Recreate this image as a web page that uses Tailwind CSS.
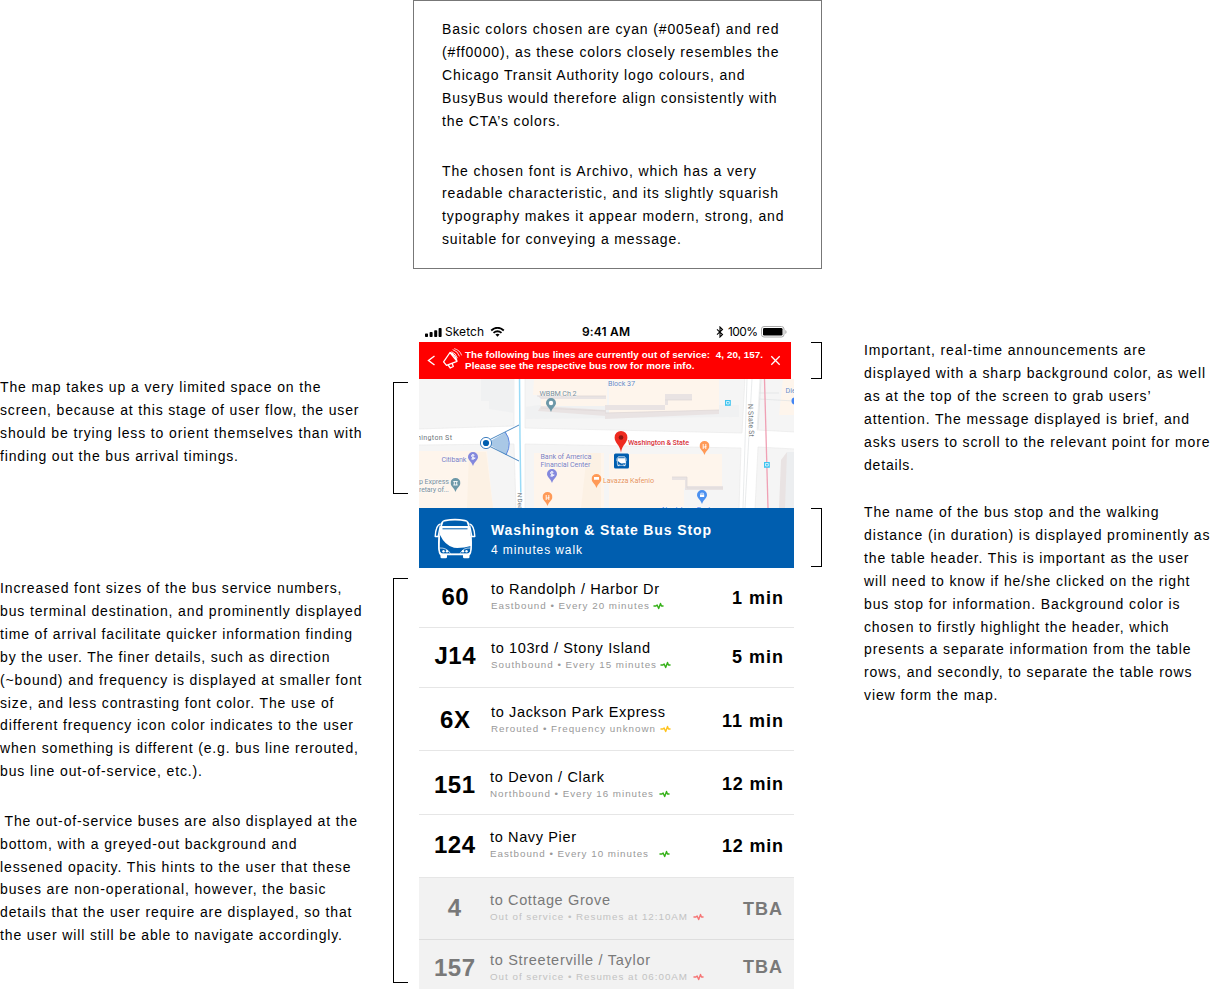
<!DOCTYPE html>
<html lang="en">
<head>
<meta charset="utf-8">
<title>BusyBus design notes</title>
<script src="https://cdn.jsdelivr.net/npm/@tailwindcss/browser@4"></script>
</head>
<body class="bg-white">
<svg class="hidden">
  <symbol id="pulse" viewBox="0 0 12 8"><path d="M0.5 4h2.700l1.300-1.200 1.700 4L8.200 1.200l1 2.800h2.300" fill="none" stroke="currentColor" stroke-width="1.500" stroke-linejoin="round"/></symbol>
  <symbol id="bus" viewBox="0 0 42 42">
    <path d="M6 9.500Q6.500 4 11 2.800Q21 .6 31 2.800Q35.500 4 36 9.500L37.500 26Q38 35 35.500 37.500H6.500Q4 35 4.500 26Z" fill="#fff"/>
    <path d="M6.500 37h6.500v3q0 1.300-1.300 1.300H7.800Q6.500 41.300 6.500 40ZM29 37h6.500v3q0 1.300-1.300 1.300h-3.900Q29 41.300 29 40Z" fill="#fff"/>
    <path d="M9.500 4.800Q21 2.200 32.500 4.800L34 9H8Z" fill="#005eaf"/>
    <path d="M8.500 11.800h25" stroke="#005eaf" stroke-width="1"/>
    <path d="M6 18Q11 28.500 20 30.800Q29 31.300 36.800 29L36.500 33.500Q35.500 36.500 33 36.500H9Q6 36.500 5.500 32Z" fill="#005eaf"/>
    <path d="M5.500 31Q13 30.500 16.500 36.700M36.500 31Q29 30.500 26 36.700" fill="none" stroke="#fff" stroke-width=".7"/>
    <path d="M6.500 7Q1.800 8 1.200 19.500H4.200L6.300 9M35.500 7q4.700 1 5.300 12.500H37.800L35.700 9" fill="#005eaf" stroke="#fff" stroke-width="1.400" stroke-linejoin="round"/>
    <path d="M5 19Q4 35 6.500 37.500h29Q38 35 37 19" fill="none" stroke="#fff" stroke-width="1.500"/>
    <g fill="#fff"><circle cx="9.500" cy="34.300" r="1.200"/><circle cx="13" cy="34.300" r="1.200"/><circle cx="29" cy="34.300" r="1.200"/><circle cx="32.500" cy="34.300" r="1.200"/></g>
  </symbol>
  <symbol id="pin" viewBox="0 0 10 14"><path d="M5 0a5 5 0 0 1 5 5C10 8 6.500 9.500 5 14C3.500 9.500 0 8 0 5A5 5 0 0 1 5 0Z" fill="currentColor"/></symbol>
</svg>

<main class="flex w-[1216px] h-[989px] overflow-hidden font-['Liberation_Sans',sans-serif] text-[14px] leading-[22.9px] text-black whitespace-nowrap [&_span]:whitespace-pre">
  <!-- left notes -->
  <section class="w-[393px] shrink-0 pt-[376px]">
    <div class="h-[201px]">
      <p><span data-w="320.500">The map takes up a very limited space on the</span><br><span data-w="358.500">screen, because at this stage of user flow, the user</span><br><span data-w="361.500">should be trying less to orient themselves than with</span><br><span data-w="238">finding out the bus arrival timings.</span></p>
    </div>
    <p class="h-[233px]"><span data-w="341.500">Increased font sizes of the bus service numbers,</span><br><span data-w="361.500">bus terminal destination, and prominently displayed</span><br><span data-w="352">time of arrival facilitate quicker information finding</span><br><span data-w="329.500">by the user. The finer details, such as direction</span><br><span data-w="361.500">(~bound) and frequency is displayed at smaller font</span><br><span data-w="333.500">size, and less contrasting font color. The use of</span><br><span data-w="353">different frequency icon color indicates to the user</span><br><span data-w="358">when something is different (e.g. bus line rerouted,</span><br><span data-w="202">bus line out-of-service, etc.).</span></p>
    <p class="leading-[22.800px]"><span data-w="357"> The out-of-service buses are also displayed at the</span><br><span data-w="296.500">bottom, with a greyed-out background and</span><br><span data-w="350.500">lessened opacity. This hints to the user that these</span><br><span data-w="325.500">buses are non-operational, however, the basic</span><br><span data-w="351.500">details that the user require are displayed, so that</span><br><span data-w="342">the user will still be able to navigate accordingly.</span></p>
  </section>
  <div class="w-[20px] shrink-0 pt-[382px]">
    <div class="w-[15px] h-[112px] border border-r-0 border-black"></div>
    <div class="mt-[84px] w-[15px] h-[405px] border border-r-0 border-black"></div>
  </div>

  <!-- centre column -->
  <section class="w-[398px] shrink-0">
    <div class="w-[409px] h-[269px] border border-[#777] pl-[28px] pt-[17px]">
      <p class="h-[141.500px]"><span data-w="336.500">Basic colors chosen are cyan (#005eaf) and red</span><br><span data-w="336.500">(#ff0000), as these colors closely resembles the</span><br><span data-w="302.500">Chicago Transit Authority logo colours, and</span><br><span data-w="334.500">BusyBus would therefore align consistently with</span><br><span data-w="118">the CTA’s colors.</span></p>
      <p><span data-w="314">The chosen font is Archivo, which has a very</span><br><span data-w="336">readable characteristic, and its slightly squarish</span><br><span data-w="341.500">typography makes it appear modern, strong, and</span><br><span data-w="239">suitable for conveying a message.</span></p>
    </div>

    <div class="ml-[6px] mt-[53px] w-[375px]">
      <!-- status bar -->
      <div class="h-[20px] flex items-center font-['Inter',sans-serif] text-[12px] leading-[20px]">
        <svg class="ml-[6px] mt-px w-[17px] h-[9px]" viewBox="0 0 17 10" preserveAspectRatio="none"><rect x="0" y="6" width="3" height="4" rx=".8"/><rect x="4.600" y="4.500" width="3" height="5.500" rx=".8"/><rect x="9.200" y="2.500" width="3" height="7.500" rx=".8"/><rect x="13.600" y="0" width="3" height="10" rx=".8"/></svg>
        <div class="ml-[3px] w-[45px]"><span data-w="39">Sketch</span></div>
        <svg class="w-[15px] h-[10px]" viewBox="0 0 14 10" fill="none" stroke="#000" stroke-width="1.900"><path d="M.7 3.400Q7-1.800 13.300 3.400M3 5.900Q7 2.500 11 5.900"/><path d="M7 9.700L4.900 7.600Q7 6 9.100 7.600Z" fill="#000" stroke="none"/></svg>
        <div class="ml-[77px] w-[134px] font-semibold"><span data-w="48">9:41 AM</span></div>
        <svg class="w-[8px] h-[12px]" viewBox="0 0 8 12" fill="none" stroke="#000" stroke-width="1.100"><path d="M1 3.300L6.500 8.500L4 11V1L6.500 3.500L1 8.700"/></svg>
        <div class="ml-[4px] w-[33px]"><span data-w="30">100%</span></div>
        <svg class="w-[26px] h-[12px]" viewBox="0 0 26 12"><rect x=".5" y=".5" width="22.500" height="10.500" rx="2.500" fill="none" stroke="#aaa"/><rect x="2" y="2" width="19.500" height="7.500" rx="1.200"/><path d="M24.300 4v4q1.300-.6 1.300-2t-1.300-2Z" fill="#aaa"/></svg>
      </div>
      <!-- alert -->
      <div class="w-[372px] h-[37px] bg-[#ff0000] flex items-center text-white">
        <svg class="ml-[8px] w-[9px] h-[11px]" viewBox="0 0 9 11" fill="none" stroke="#fff" stroke-width="1.400"><path d="M7.500 1L1.500 5.500L7.500 10"/></svg>
        <svg class="ml-[6px] mb-[4px] w-[21px] h-[21px]" viewBox="0 0 21 21" fill="none" stroke="#fff" stroke-width="1.300" stroke-linejoin="round" stroke-linecap="round"><path d="M8 4.500L15 13.300L4.500 17.300L1.600 13.800ZM8 4.500Q10.500 5 12.700 7.800T15 13.300M6.500 17.500l1.800 2.500l3-1.500l-1-2.700"/><path d="M9.800 3.700Q14 5 15.300 9.800M11 1.700Q16 3.200 17.400 8M12.500 .7Q18 2 19.500 7" stroke-width=".8"/></svg>
        <p class="ml-[2px] mb-[2px] w-[304px] font-bold text-[9.800px] leading-[11px]"><span data-w="298">The following bus lines are currently out of service:  4, 20, 157.</span><br><span data-w="229.500">Please see the respective bus row for more info.</span></p>
        <svg class="ml-[1px] w-[11px] h-[11px]" viewBox="0 0 11 11" stroke="#fff" stroke-width="1.300"><path d="M1.300 1.300L9.700 9.700M9.700 1.300L1.300 9.700"/></svg>
      </div>
      <!-- map -->
      <svg class="block w-[375px] h-[129px]" viewBox="0 0 375 129" font-family="Roboto, sans-serif" font-size="7.200">
        <rect width="375" height="129" fill="#fff"/>
        <g fill="#f5f5f5" stroke="#e8e8e8" stroke-width=".6">
          <path d="M-1-1H95V47L-1 50ZM106-1H326L323 54L106 49ZM341-1H376V53L338 51ZM-1 66L95 65L97 130H-1ZM106 65L322 69L320 130H106ZM339 68L376 70V130H336Z"/>
        </g>
        <path d="M62 0H95V34L70 30V22H62ZM120 26H320V38L106 40V28Z" fill="#f0f1f2"/>
        <path d="M115 0H188V27H122V16H114ZM190 0H300V34H190ZM0 72H68L74 129H0ZM115 74H185V129H115ZM190 75H303V109H265V129H190ZM364 0H375V36H360Z" fill="#fef5ec"/>
        <path d="M50 73H67L74 129H48ZM168 74H182V129H162Z" fill="#fcf1e4"/>
        <path d="M119 17H187V20H122ZM122 27L187 31V37L119 32ZM186 26H246V31H186ZM246 15H273V21H249V26H246ZM186 34L300 31V35L186 40ZM253 98H268V107H304V111H266V101H253ZM362 81L368 73V129H360Z" fill="#e9e3e3"/>
        <path d="M118 17H187M122 29L187 32M186 34L300 31M246 21H273M253 98H268V109H304" fill="none" stroke="#dcd5d6" stroke-width=".7"/>
        <path d="M340 14H360M340 20L375 22M342 0L339 50M333 0L326 129M328 0L324 129" fill="none" stroke="#dfe2e4" stroke-width=".7"/>
        <path d="M368 73H375V129H366Z" fill="#eceef0"/>
        <path d="M100.500 0L101 60L102 129" fill="none" stroke="#9adbf7" stroke-width="1.500"/>
        <path d="M345.500 0L349 129" fill="none" stroke="#f0a0b4" stroke-width="1.300"/>
        <path d="M68 64L87 53Q93 64 87 76Z" fill="#a9c8e6"/><path d="M86 53Q94 63 87 76" fill="none" stroke="#5a86e0" stroke-width="1"/>
        <path d="M70 61L100 46M70 67L100 82" stroke="#3579ba" stroke-width=".9"/>
        <circle cx="67" cy="64" r="5.600" fill="#fff" stroke="#2a70b8" stroke-width=".9"/><circle cx="67" cy="64" r="3.100" fill="#005eaf"/>
        <g fill="#6c7479" stroke="#fff" stroke-width="1.500" paint-order="stroke">
          <text x="-2" y="60.500" textLength="35">hington St</text>
          <text transform="translate(98.500 114) rotate(88)" font-size="6">N Dea</text>
          <text transform="translate(329 25) rotate(88)" textLength="33">N State St</text>
        </g>
        <g stroke="#fff" stroke-opacity=".6" stroke-width="1" paint-order="stroke">
          <g fill="#7a909c"><text x="120.500" y="16.500" textLength="37">WBBM Ch 2</text><text x="0" y="105" textLength="30">p Express</text><text x="0" y="113" textLength="30">retary of...</text></g>
          <g fill="#7b7fc0"><text x="22.500" y="82.500" textLength="25">Citibank</text><text x="121.500" y="80" textLength="51">Bank of America</text><text x="121.500" y="88" textLength="50">Financial Center</text></g>
          <g fill="#6a8cc4"><text x="189" y="7" textLength="27">Block 37</text><text x="366.500" y="14">Die</text><text x="243" y="132.500" textLength="50" fill="#4285f4">Nordstrom Rack</text></g>
          <text x="184" y="104" fill="#e8935a" textLength="51">Lavazza Kafenio</text>
          <text x="209" y="65.500" fill="#d8303b" textLength="61" font-weight="500">Washington &amp; State</text>
        </g>
        <g class="text-[#6d98a8]"><use href="#pin" x="127" y="19" width="10" height="14"/><use href="#pin" x="31.500" y="99" width="10" height="14"/></g>
        <g class="text-[#8388dd]"><use href="#pin" x="49" y="73" width="10" height="14"/><use href="#pin" x="128" y="90" width="10" height="14"/></g>
        <g class="text-[#ff9a57]"><use href="#pin" x="123.500" y="113" width="10" height="14"/><use href="#pin" x="172.500" y="95" width="10" height="14"/><use href="#pin" x="280.500" y="62" width="10" height="14"/></g>
        <g class="text-[#4a90f0]"><use href="#pin" x="278" y="111" width="10" height="14"/></g>
        <circle cx="132" cy="24" r="2.200" fill="#fff"/>
        <g fill="none" stroke="#fff" stroke-width=".9"><path d="M34.300 102.500h4.400M34.300 106h4.400M35.300 103v3M37.700 103v3"/><path d="M127.200 116v5M129.800 116v3H127.200M284.200 65v5M286.800 65v3H284.200M129.800 118v3M286.800 67v3"/><path d="M55.500 76.300Q52 75 52.500 77T55.500 79T52.300 80M54 75v6M134.500 93.300Q131 92 131.500 94T134.500 96T131.300 97M133 92v6"/></g>
        <path d="M175 98h5v2.800h-5ZM281 115.500h4.200v2.600H281Z" fill="#fff"/><path d="M281.800 115.500v-1.300h2.600v1.300" fill="none" stroke="#fff" stroke-width=".7"/>
        <path d="M202 52A6.400 6.400 0 0 1 208.400 58.400C208.400 64 203 65.500 202 73.500C201 65.500 195.600 64 195.600 58.400A6.400 6.400 0 0 1 202 52Z" fill="#ee2b20"/><circle cx="202" cy="58.500" r="2.300" fill="#8e1510"/>
        <rect x="195" y="74.500" width="15" height="15" rx="1.500" fill="#005eaf"/><use href="#bus" x="197" y="76.500" width="11" height="11"/>
        <g fill="#3fc4f0"><rect x="306" y="21" width="5.800" height="5.800"/><rect x="345" y="83" width="5.800" height="5.800"/></g>
        <path d="M307.500 22.500h2.800v2.500h-2.800ZM346.500 84.500h2.800V87h-2.800Z" fill="none" stroke="#fff" stroke-width=".7"/>
        <circle cx="376" cy="22" r="3.500" fill="#4285f4"/>
      </svg>
      <!-- stop header -->
      <div class="h-[60px] bg-[#005eaf] text-white flex">
        <svg class="ml-[15px] mt-[9px] w-[42px] h-[42px]"><use href="#bus"/></svg>
        <div class="ml-[15px] pt-[12px]">
          <p class="text-[14px] leading-[20px] font-bold"><span data-w="220">Washington &amp; State Bus Stop</span></p>
          <p class="pt-px text-[12px] leading-[18px]"><span data-w="91">4 minutes walk</span></p>
        </div>
      </div>
      <!-- bus rows -->
      <div class="text-[14.500px] leading-[16px]">
        <div class="h-[60px] border-b border-[#e6e6e6] flex pt-[13px]">
          <div class="w-[72px] text-center text-[24px] leading-[32px] font-bold"><span data-w="27">60</span></div>
          <div class="w-[220px]"><p><span data-w="168">to Randolph / Harbor Dr</span></p><p class="mt-px flex items-center text-[9.800px] text-[#999]"><span data-w="158">Eastbound • Every 20 minutes</span><svg class="ml-[4px] w-[11px] h-[8px] text-[#33b016]"><use href="#pulse"/></svg></p></div>
          <div class="w-[72px] pt-[9px] text-right text-[18px] font-bold"><span data-w="51">1 min</span></div>
        </div>
        <div class="h-[60px] border-b border-[#e6e6e6] flex pt-[12px]">
          <div class="w-[72px] text-center text-[24px] leading-[32px] font-bold"><span data-w="41">J14</span></div>
          <div class="w-[220px]"><p><span data-w="159">to 103rd / Stony Island</span></p><p class="mt-px flex items-center text-[9.800px] text-[#999]"><span data-w="165">Southbound • Every 15 minutes</span><svg class="ml-[4px] w-[11px] h-[8px] text-[#33b016]"><use href="#pulse"/></svg></p></div>
          <div class="w-[72px] pt-[9px] text-right text-[18px] font-bold"><span data-w="51">5 min</span></div>
        </div>
        <div class="h-[63px] border-b border-[#e6e6e6] flex pt-[16px]">
          <div class="w-[72px] text-center text-[24px] leading-[32px] font-bold"><span data-w="30">6X</span></div>
          <div class="w-[220px]"><p><span data-w="174">to Jackson Park Express</span></p><p class="mt-px flex items-center text-[9.800px] text-[#999]"><span data-w="164">Rerouted • Frequency unknown</span><svg class="ml-[5px] w-[11px] h-[8px] text-[#ffc21a]"><use href="#pulse"/></svg></p></div>
          <div class="w-[72px] pt-[9px] text-right text-[18px] font-bold"><span data-w="61">11 min</span></div>
        </div>
        <div class="h-[64px] border-b border-[#e6e6e6] flex pt-[18px]">
          <div class="w-[71px] text-center text-[24px] leading-[32px] font-bold"><span data-w="41">151</span></div>
          <div class="w-[221px]"><p><span data-w="114">to Devon / Clark</span></p><p class="mt-px flex items-center text-[9.800px] text-[#999]"><span data-w="163">Northbound • Every 16 minutes</span><svg class="ml-[6px] w-[11px] h-[8px] text-[#33b016]"><use href="#pulse"/></svg></p></div>
          <div class="w-[72px] pt-[7px] text-right text-[18px] font-bold"><span data-w="61">12 min</span></div>
        </div>
        <div class="h-[63px] border-b border-[#e6e6e6] flex pt-[14px]">
          <div class="w-[71px] text-center text-[24px] leading-[32px] font-bold"><span data-w="41">124</span></div>
          <div class="w-[221px]"><p><span data-w="86">to Navy Pier</span></p><p class="mt-px flex items-center text-[9.800px] text-[#999]"><span data-w="158">Eastbound • Every 10 minutes</span><svg class="ml-[11px] w-[11px] h-[8px] text-[#33b016]"><use href="#pulse"/></svg></p></div>
          <div class="w-[72px] pt-[9px] text-right text-[18px] font-bold"><span data-w="61">12 min</span></div>
        </div>
        <div class="h-[62px] bg-[#f2f2f2] border-b border-[#dedede] flex pt-[14px] text-[#797979]">
          <div class="w-[71px] text-center text-[24px] leading-[32px] font-bold"><span>4</span></div>
          <div class="w-[221px]"><p><span data-w="120">to Cottage Grove</span></p><p class="mt-px flex items-center text-[9.800px] text-[#c2c2c2]"><span data-w="197">Out of service • Resumes at 12:10AM</span><svg class="ml-[6px] w-[11px] h-[8px] text-[#f67474]"><use href="#pulse"/></svg></p></div>
          <div class="w-[71px] pt-[9px] text-right text-[18px] font-bold"><span data-w="39">TBA</span></div>
        </div>
        <div class="h-[50px] bg-[#f2f2f2] flex pt-[12px] text-[#797979]">
          <div class="w-[71px] text-center text-[24px] leading-[32px] font-bold"><span data-w="41">157</span></div>
          <div class="w-[221px]"><p><span data-w="160">to Streeterville / Taylor</span></p><p class="mt-px flex items-center text-[9.800px] text-[#c2c2c2]"><span data-w="197">Out of service • Resumes at 06:00AM</span><svg class="ml-[6px] w-[11px] h-[8px] text-[#f67474]"><use href="#pulse"/></svg></p></div>
          <div class="w-[71px] pt-[7px] text-right text-[18px] font-bold"><span data-w="39">TBA</span></div>
        </div>
      </div>
    </div>
  </section>

  <!-- right notes -->
  <div class="w-[53px] shrink-0 pt-[342px]">
    <div class="w-[11px] h-[37px] border border-l-0 border-black"></div>
    <div class="mt-[129px] w-[11px] h-[59px] border border-l-0 border-black"></div>
  </div>
  <section class="w-[352px] shrink-0 pt-[339px]">
    <p class="h-[162px]"><span data-w="281.500">Important, real-time announcements are</span><br><span data-w="341">displayed with a sharp background color, as well</span><br><span data-w="286.500">as at the top of the screen to grab users’</span><br><span data-w="325">attention. The message displayed is brief, and</span><br><span data-w="345.500">asks users to scroll to the relevant point for more</span><br><span data-w="50">details.</span></p>
    <p><span data-w="294.500">The name of the bus stop and the walking</span><br><span data-w="345.500">distance (in duration) is displayed prominently as</span><br><span data-w="324.500">the table header. This is important as the user</span><br><span data-w="325.500">will need to know if he/she clicked on the right</span><br><span data-w="315.500">bus stop for information. Background color is</span><br><span data-w="304.500">chosen to firstly highlight the header, which</span><br><span data-w="326.500">presents a separate information from the table</span><br><span data-w="327.500">rows, and secondly, to separate the table rows</span><br><span data-w="133.500">view form the map.</span></p>
  </section>
</main>
<script>
  // Track each line out to its set width; the negative margin drops the trailing gap.
  function fitLines() {
    document.querySelectorAll('[data-w]').forEach(function (el) {
      el.style.letterSpacing = '0px';
      var range = document.createRange();
      range.selectNodeContents(el);
      var gap = (el.dataset.w - range.getBoundingClientRect().width) / (el.textContent.length - 1);
      el.style.letterSpacing = gap + 'px';
      el.style.marginRight = -gap + 'px';
    });
  }
  fitLines();
  window.addEventListener('load', function () {
    fitLines();
    document.fonts.ready.then(fitLines);
    requestAnimationFrame(fitLines);
  });
</script>
</body>
</html>
